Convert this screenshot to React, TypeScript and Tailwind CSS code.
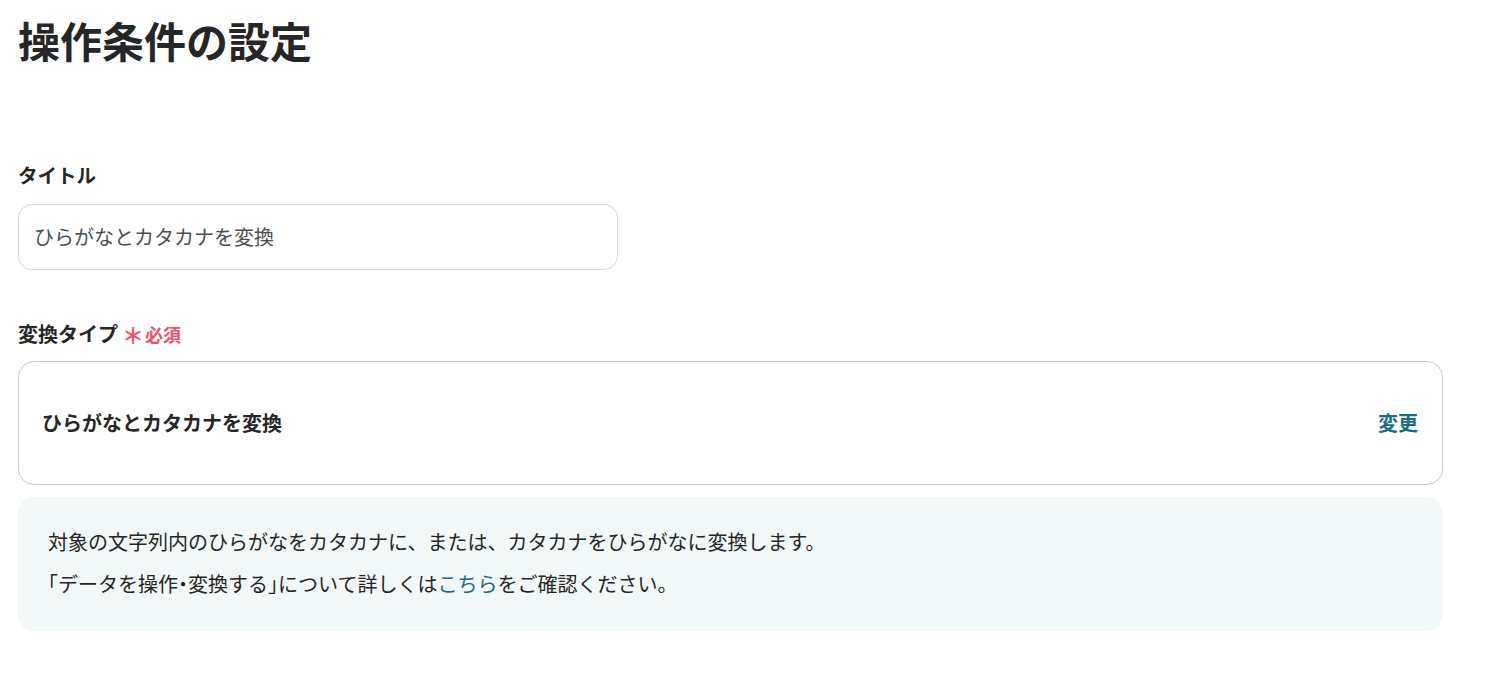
import React from 'react';

const font = "font-['Noto_Sans_CJK_JP','Noto_Sans',sans-serif]";
const half = "[font-feature-settings:'halt']";

export default function App() {
  return (
    <div className={`min-h-screen bg-white px-[18px] pt-[9px] ${font} text-[#262626]`}>
      {/* Page heading */}
      <h1 className="text-[42px] font-bold leading-[62px]">操作条件の設定</h1>

      {/* Title field */}
      <div className="mt-[91px]">
        <label className="block text-[19.5px] font-bold leading-[26px]">タイトル</label>
        <div className="mt-[16px] flex h-[66px] w-[600px] items-center rounded-[14px] border border-[#d3d7dd] px-[15px]">
          <span className="text-[20px] leading-[28px] text-[#4b4f56]">ひらがなとカタカナを変換</span>
        </div>
      </div>

      {/* Conversion type */}
      <div className="mt-[51px]">
        <div className="flex items-center leading-[26px]">
          <span className="text-[20px] font-bold">変換タイプ</span>
          <span className="ml-[4px] text-[22px] font-bold text-[#f0506a]">＊</span>
          <span className="ml-[1px] text-[18px] font-bold text-[#f0506a]">必須</span>
        </div>
        <div className="mt-[14px] flex h-[124px] w-[1425px] items-center justify-between rounded-[16px] border border-[#c9c9c9] pl-[23px] pr-[24px]">
          <span className="text-[20px] font-bold leading-[28px]">ひらがなとカタカナを変換</span>
          <button className="text-[20px] font-bold leading-[28px] text-[#1b6c82]">変更</button>
        </div>
        <div className="mt-[12px] w-[1425px] rounded-[16px] bg-[#f2f8f8] px-[30px] pt-[24px] pb-[26px] text-[20px] leading-[42px] text-[#262626]">
          <p>対象の文字列内のひらがなをカタカナに、または、カタカナをひらがなに変換します。</p>
          <p>
            <span className={half}>「</span>データを操作<span className={half}>・</span>変換する
            <span className={half}>」</span>について詳しくは
            <a className="text-[#1b6c82]">こちら</a>
            をご確認ください。
          </p>
        </div>
      </div>
    </div>
  );
}
